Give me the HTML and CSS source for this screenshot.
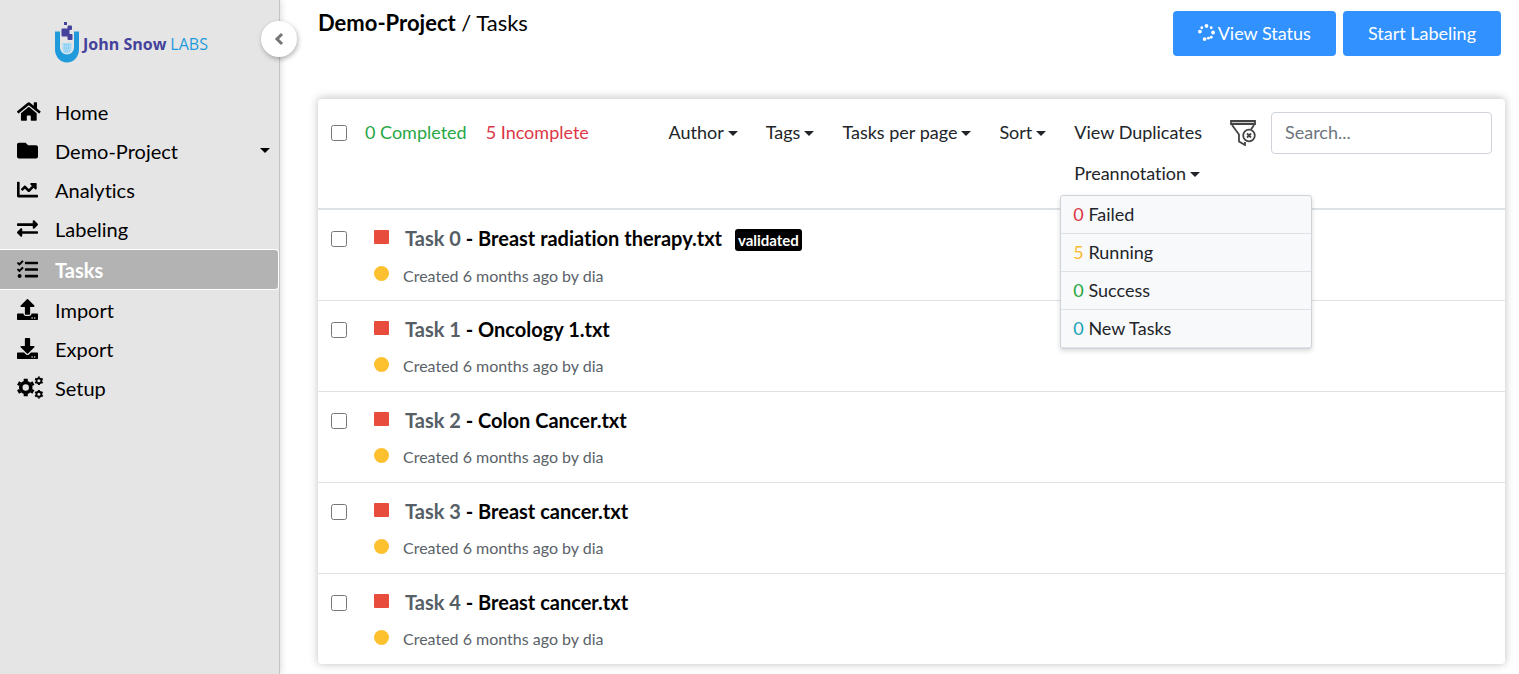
FILE: index.html
```
<!DOCTYPE html>
<html lang="en">
<head>
  <meta charset="UTF-8">
  <title>Demo-Project / Tasks</title>
  <link rel="stylesheet" href="styles.css">
</head>
<body>

  <!-- Sidebar -->
  <aside class="sidebar">
    <a class="logo" href="#">
      <svg class="logo-mark" viewBox="0 0 24 42" aria-hidden="true">
        <path d="M0 10.5h5v16a7 7 0 0 0 14 0v-16h5v18a12 13 0 0 1-24 0z" fill="#1f9bdc"/>
        <path d="M7.500 22h9v6a4.500 4.500 0 0 1-9 0z" fill="#a6dbf7"/>
        <path d="M9 24h6M9 27h6M10 30h4" stroke="#6fc0ea" stroke-dasharray="1 1"/>
        <g fill="#44429b">
          <rect x="9" y="1" width="3" height="3"/>
          <rect x="12.500" y="4.500" width="4.500" height="4.500" rx="1"/>
          <rect x="6.500" y="7.500" width="8" height="8" rx="1"/>
          <rect x="12.500" y="13" width="5" height="6" rx="1"/>
        </g>
      </svg>
      <span class="logo-name">John Snow</span>
      <span class="logo-labs">LABS</span>
    </a>

    <button class="collapse" type="button" aria-label="Collapse sidebar">
      <svg viewBox="0 0 10 14" aria-hidden="true"><path d="M8 2L3 7l5 5" fill="none" stroke="currentColor" stroke-width="3"/></svg>
    </button>

    <nav class="menu">
      <a class="menu-item" href="#">
        <svg class="icon" viewBox="0 0 576 512" preserveAspectRatio="xMinYMid" aria-hidden="true"><path d="M280.37 148.26L96 300.11V464a16 16 0 0 0 16 16l112.06-.29a16 16 0 0 0 15.92-16V368a16 16 0 0 1 16-16h64a16 16 0 0 1 16 16v95.64a16 16 0 0 0 16 16.05L464 480a16 16 0 0 0 16-16V300L295.67 148.26a12.19 12.19 0 0 0-15.3 0zM571.6 251.47L488 182.56V44.05a12 12 0 0 0-12-12h-56a12 12 0 0 0-12 12v72.61L318.47 43a48 48 0 0 0-61 0L4.34 251.47a12 12 0 0 0-1.6 16.9l25.5 31A12 12 0 0 0 45.15 301l235.22-193.74a12.19 12.19 0 0 1 15.3 0L530.9 301a12 12 0 0 0 16.9-1.6l25.5-31a12 12 0 0 0-1.7-16.93z"/></svg>
        <span>Home</span>
      </a>
      <a class="menu-item" href="#">
        <svg class="icon" viewBox="0 0 512 512" preserveAspectRatio="xMinYMid" aria-hidden="true"><path d="M464 128H272l-64-64H48C21.49 64 0 85.49 0 112v288c0 26.51 21.49 48 48 48h416c26.51 0 48-21.49 48-48V176c0-26.51-21.49-48-48-48z"/></svg>
        <span class="caret menu-caret">Demo-Project</span>
      </a>
      <a class="menu-item" href="#">
        <svg class="icon" viewBox="0 0 512 512" preserveAspectRatio="xMinYMid" aria-hidden="true"><path d="M496 384H64V80c0-8.84-7.16-16-16-16H16C7.16 64 0 71.16 0 80v336c0 17.67 14.33 32 32 32h464c8.84 0 16-7.16 16-16v-32c0-8.84-7.16-16-16-16zM464 96H345.94c-21.38 0-32.09 25.85-16.97 40.97l32.4 32.4L288 242.75l-73.37-73.37c-12.5-12.5-32.76-12.5-45.25 0l-68.69 68.69c-6.25 6.25-6.25 16.38 0 22.63l22.62 22.62c6.25 6.25 16.38 6.25 22.63 0L192 237.25l73.37 73.37c12.5 12.5 32.76 12.5 45.25 0l96-96 32.4 32.4c15.12 15.12 40.97 4.41 40.97-16.97V112c.01-8.84-7.15-16-15.99-16z"/></svg>
        <span>Analytics</span>
      </a>
      <a class="menu-item" href="#">
        <svg class="icon" viewBox="0 0 512 512" preserveAspectRatio="xMinYMid" aria-hidden="true"><path d="M0 168v-16c0-13.255 10.745-24 24-24h360V80c0-21.367 25.899-32.042 40.971-16.971l80 80c9.372 9.373 9.372 24.569 0 33.941l-80 80C409.956 271.982 384 261.456 384 240v-48H24c-13.255 0-24-10.745-24-24zm488 152H128v-48c0-21.314-25.862-32.08-40.971-16.971l-80 80c-9.372 9.373-9.372 24.569 0 33.941l80 80C102.057 463.997 128 453.437 128 432v-48h360c13.255 0 24-10.745 24-24v-16c0-13.255-10.745-24-24-24z"/></svg>
        <span>Labeling</span>
      </a>
      <a class="menu-item active" href="#">
        <svg class="icon" viewBox="0 0 512 512" preserveAspectRatio="xMinYMid" aria-hidden="true"><path d="M139.61 35.5a12 12 0 0 0-17 0L58.93 98.81l-22.7-22.12a12 12 0 0 0-17 0L3.53 92.41a12 12 0 0 0 0 17l47.59 47.4a12.78 12.78 0 0 0 17.61 0l15.59-15.62L156.52 69a12.09 12.09 0 0 0 .09-17zm0 159.19a12 12 0 0 0-17 0l-63.68 63.72-22.7-22.1a12 12 0 0 0-17 0L3.53 252a12 12 0 0 0 0 17L51 316.5a12.77 12.77 0 0 0 17.6 0l15.7-15.69 72.2-72.22a12 12 0 0 0 .09-16.9zM64 368c-26.49 0-48.59 21.5-48.59 48S37.53 464 64 464a48 48 0 0 0 0-96zm432 16H208a16 16 0 0 0-16 16v32a16 16 0 0 0 16 16h288a16 16 0 0 0 16-16v-32a16 16 0 0 0-16-16zm0-320H208a16 16 0 0 0-16 16v32a16 16 0 0 0 16 16h288a16 16 0 0 0 16-16V80a16 16 0 0 0-16-16zm0 160H208a16 16 0 0 0-16 16v32a16 16 0 0 0 16 16h288a16 16 0 0 0 16-16v-32a16 16 0 0 0-16-16z"/></svg>
        <span>Tasks</span>
      </a>
      <a class="menu-item" href="#">
        <svg class="icon" viewBox="0 0 512 512" preserveAspectRatio="xMinYMid" aria-hidden="true"><path d="M296 384h-80c-13.3 0-24-10.7-24-24V192h-87.7c-17.8 0-26.7-21.5-14.1-34.1L242.3 5.7c7.5-7.5 19.8-7.5 27.3 0l152.2 152.2c12.6 12.6 3.7 34.1-14.1 34.1H320v168c0 13.3-10.7 24-24 24zm216-8v112c0 13.3-10.7 24-24 24H24c-13.3 0-24-10.7-24-24V376c0-13.3 10.7-24 24-24h136v8c0 30.9 25.1 56 56 56h80c30.9 0 56-25.1 56-56v-8h136c13.3 0 24 10.7 24 24zm-124 88c0-11-9-20-20-20s-20 9-20 20 9 20 20 20 20-9 20-20zm64 0c0-11-9-20-20-20s-20 9-20 20 9 20 20 20 20-9 20-20z"/></svg>
        <span>Import</span>
      </a>
      <a class="menu-item" href="#">
        <svg class="icon" viewBox="0 0 512 512" preserveAspectRatio="xMinYMid" aria-hidden="true"><path d="M216 0h80c13.3 0 24 10.7 24 24v168h87.7c17.8 0 26.7 21.5 14.1 34.1L269.7 378.3c-7.5 7.5-19.8 7.5-27.3 0L90.1 226.1c-12.6-12.6-3.7-34.1 14.1-34.1H192V24c0-13.3 10.7-24 24-24zm296 376v112c0 13.3-10.7 24-24 24H24c-13.3 0-24-10.7-24-24V376c0-13.3 10.7-24 24-24h146.7l49 49c20.1 20.1 52.5 20.1 72.6 0l49-49H488c13.3 0 24 10.7 24 24zm-124 88c0-11-9-20-20-20s-20 9-20 20 9 20 20 20 20-9 20-20zm64 0c0-11-9-20-20-20s-20 9-20 20 9 20 20 20 20-9 20-20z"/></svg>
        <span>Export</span>
      </a>
      <a class="menu-item" href="#">
        <svg class="icon" viewBox="0 0 640 512" preserveAspectRatio="xMinYMid" aria-hidden="true">
          <g fill="none" stroke="#000">
            <circle cx="213" cy="256" r="122" stroke-width="88"/>
            <path d="M213 40v432M26 148l374 216M26 364l374-216" stroke-width="100" stroke-dasharray="60 312"/>
            <circle cx="534" cy="92" r="60" stroke-width="44"/>
            <path d="M534-14v212M442 39l184 106M442 145l184-106" stroke-width="48" stroke-dasharray="34 144"/>
            <circle cx="534" cy="420" r="60" stroke-width="44"/>
            <path d="M534 314v212M442 367l184 106M442 473l184-106" stroke-width="48" stroke-dasharray="34 144"/>
          </g>
        </svg>
        <span>Setup</span>
      </a>
    </nav>
  </aside>
  <!-- End of Sidebar -->

  <main class="content">
    <header class="page-header">
      <h1 class="page-title"><strong>Demo-Project</strong> / Tasks</h1>
      <div class="actions">
        <button class="btn" type="button">
          <svg class="spinner" viewBox="0 0 18 18" aria-hidden="true">
            <g fill="#fff">
              <circle cx="9" cy="2" r="2"/>
              <circle cx="14" cy="4" r="1.500"/>
              <circle cx="16" cy="9" r="2"/>
              <circle cx="14" cy="14" r="1.500"/>
              <circle cx="7" cy="16" r="2"/>
              <circle cx="2" cy="8" r="2"/>
              <circle cx="4" cy="4" r="1.500"/>
              <circle cx="11" cy="15" r="1.500"/>
            </g>
          </svg>
          View Status
        </button>
        <button class="btn" type="button">Start Labeling</button>
      </div>
    </header>

    <section class="card">
      <!-- Filters -->
      <div class="toolbar">
        <input class="check" type="checkbox" aria-label="Select all tasks">
        <a class="count green" href="#">0 Completed</a>
        <a class="count red" href="#">5 Incomplete</a>

        <div class="filters">
          <button class="filter caret" type="button">Author</button>
          <button class="filter caret" type="button">Tags</button>
          <button class="filter caret" type="button">Tasks per page</button>
          <button class="filter caret" type="button">Sort</button>
          <div class="filter-stack">
            <button class="filter" type="button">View Duplicates</button>
            <button class="filter caret" type="button" aria-expanded="true">Preannotation</button>
            <ul class="dropdown">
              <li><a href="#"><span class="red">0</span> Failed</a></li>
              <li><a href="#"><span class="yellow">5</span> Running</a></li>
              <li><a href="#"><span class="green">0</span> Success</a></li>
              <li><a href="#"><span class="teal">0</span> New Tasks</a></li>
            </ul>
          </div>
          <button class="clear" type="button" aria-label="Clear filters">
            <svg viewBox="0 0 26 26" aria-hidden="true">
              <path d="M1 1h24v3H1z" fill="#ccc"/>
              <g fill="none" stroke="#444" stroke-width="1.800">
                <path d="M1 1h24v3H1zM2 5l7 9.500v7l6 3.500v-3M24 5l-3 4.500"/>
                <circle cx="19" cy="15.500" r="5.800"/>
                <path d="M17 13.500l4 4M21 13.500l-4 4"/>
              </g>
            </svg>
          </button>
        </div>
        <input class="search" type="text" placeholder="Search..." aria-label="Search">
      </div>

      <!-- Task list -->
      <ul class="tasks">
        <li class="task">
          <input class="check" type="checkbox" aria-label="Select Task 0">
          <div class="marks"><span class="square"></span><span class="dot"></span></div>
          <div class="info">
            <a class="task-title" href="#"><span class="task-id">Task 0</span> - Breast radiation therapy.txt <span class="badge">validated</span></a>
            <p class="meta">Created 6 months ago by dia</p>
          </div>
        </li>
        <li class="task">
          <input class="check" type="checkbox" aria-label="Select Task 1">
          <div class="marks"><span class="square"></span><span class="dot"></span></div>
          <div class="info">
            <a class="task-title" href="#"><span class="task-id">Task 1</span> - Oncology 1.txt</a>
            <p class="meta">Created 6 months ago by dia</p>
          </div>
        </li>
        <li class="task">
          <input class="check" type="checkbox" aria-label="Select Task 2">
          <div class="marks"><span class="square"></span><span class="dot"></span></div>
          <div class="info">
            <a class="task-title" href="#"><span class="task-id">Task 2</span> - Colon Cancer.txt</a>
            <p class="meta">Created 6 months ago by dia</p>
          </div>
        </li>
        <li class="task">
          <input class="check" type="checkbox" aria-label="Select Task 3">
          <div class="marks"><span class="square"></span><span class="dot"></span></div>
          <div class="info">
            <a class="task-title" href="#"><span class="task-id">Task 3</span> - Breast cancer.txt</a>
            <p class="meta">Created 6 months ago by dia</p>
          </div>
        </li>
        <li class="task">
          <input class="check" type="checkbox" aria-label="Select Task 4">
          <div class="marks"><span class="square"></span><span class="dot"></span></div>
          <div class="info">
            <a class="task-title" href="#"><span class="task-id">Task 4</span> - Breast cancer.txt</a>
            <p class="meta">Created 6 months ago by dia</p>
          </div>
        </li>
      </ul>
    </section>
  </main>

</body>
</html>
```
FILE: styles.css
```
* {
  box-sizing: border-box;
}

body {
  background-color: #fff;
  color: #212529;
  display: flex;
  font-family: Lato, sans-serif;
  font-size: 18px;
  font-variant-ligatures: none;
  line-height: 24px;
  margin: 0;
  min-height: 100vh;
}

a {
  color: inherit;
  text-decoration: none;
}

button {
  background: none;
  border: 0;
  color: inherit;
  cursor: pointer;
  font: inherit;
  font-variant-ligatures: none;
  padding: 0;
}

ul {
  list-style: none;
  margin: 0;
  padding: 0;
}

/* Sidebar */
.sidebar {
  background-color: #e5e5e5;
  border-right: 1px solid #c4c4c4;
  box-shadow: 1px 0 6px rgba(0, 0, 0, 0.15);
  flex: 0 0 280px;
  position: relative;
}

.logo {
  align-items: center;
  display: flex;
  font-family: "Open Sans", sans-serif;
  font-size: 16px;
  height: 92px;
  padding: 0 0 8px 55px;
}

.logo span {
  padding-top: 3px;
}

.logo-mark {
  height: 42px;
  margin-right: 4px;
  width: 24px;
}

.logo-name {
  color: #44429b;
  font-weight: 700;
  margin-right: 4px;
}

.logo-labs {
  color: #1f9bdc;
}

.collapse {
  align-items: center;
  background-color: #fff;
  border-radius: 50%;
  box-shadow: 1px 2px 5px rgba(0, 0, 0, 0.3);
  color: #757575;
  display: flex;
  height: 36px;
  justify-content: center;
  position: absolute;
  right: -18px;
  top: 21px;
  width: 36px;
}

.collapse svg {
  height: 14px;
  width: 10px;
}

.menu-item {
  align-items: center;
  color: #000;
  display: flex;
  font-size: 20px;
  height: 39px;
  padding: 0 9px 0 17px;
}

.menu-item span {
  flex: 1;
}

.menu-item.active {
  background-color: #b3b3b3;
  border: 1px solid #fff;
  border-left: 0;
  border-radius: 0 4px 4px 0;
  height: 41px;
  margin-top: 1px;
}

.menu-item.active span {
  color: #fff;
  font-weight: 700;
}

.icon {
  flex: none;
  height: 21px;
  overflow: visible;
  width: 38px;
}

.caret::after {
  border-left: 5px solid transparent;
  border-right: 5px solid transparent;
  border-top: 5px solid;
  content: "";
  display: inline-block;
  margin-left: 4px;
  vertical-align: 3px;
}

.menu-caret {
  align-items: center;
  display: flex;
  justify-content: space-between;
}

/* Content */
.content {
  flex: 1;
  padding: 11px 14px 10px 38px;
}

.page-header {
  display: flex;
  justify-content: space-between;
  padding-right: 4px;
}

.page-title {
  color: #000;
  font-size: 22px;
  font-weight: 400;
  margin: 0;
}

.actions {
  display: flex;
  gap: 7px;
}

.btn {
  align-items: center;
  background-color: #3091ff;
  border-radius: 4px;
  color: #fff;
  display: flex;
  gap: 3px;
  height: 45px;
  padding: 0 25px 2px;
}

.spinner {
  height: 17px;
  width: 17px;
}

.card {
  border-radius: 4px;
  border-top: 1px solid #dee2e6;
  box-shadow: 0 0 8px rgba(0, 0, 0, 0.25);
  margin-top: 42px;
}

.toolbar {
  align-items: flex-start;
  border-bottom: 2px solid #dee2e6;
  display: flex;
  height: 111px;
  padding: 13px 13px 0;
}

.check {
  flex: none;
  height: 16px;
  margin: 0;
  width: 16px;
}

.toolbar .check {
  margin: 13px 18px 0 0;
}

.count {
  margin-right: 19px;
  padding-top: 8px;
}

.green {
  color: #28a745;
}

.red {
  color: #dc3545;
}

.yellow {
  color: #fbbc34;
}

.teal {
  color: #17a2b8;
}

.filters {
  align-items: flex-start;
  display: flex;
  gap: 28px;
  margin-left: auto;
  padding-top: 8px;
}

.filter-stack {
  align-items: flex-start;
  display: flex;
  flex-direction: column;
  gap: 17px;
  position: relative;
}

.clear {
  height: 26px;
  width: 26px;
}

.clear svg {
  display: block;
  height: 26px;
  width: 26px;
}

.dropdown {
  background-color: #f8f9fb;
  border: 1px solid #ced4da;
  border-radius: 3px;
  box-shadow: 0 2px 5px rgba(0, 0, 0, 0.15);
  left: -14px;
  position: absolute;
  top: 75px;
  width: 252px;
}

.dropdown a {
  border-bottom: 1px solid #dee2e6;
  display: block;
  height: 38px;
  line-height: 36px;
  padding-left: 12px;
}

.search {
  border: 1px solid #ced4da;
  border-radius: 4px;
  color: #495057;
  font: inherit;
  height: 42px;
  margin-left: 15px;
  padding: 0 13px 2px;
  width: 221px;
}

.search::placeholder {
  color: #6c757d;
}

/* Task list */
.task {
  border-bottom: 1px solid #dee2e6;
  display: flex;
  height: 91px;
  padding: 16px 13px 0;
}

.task:last-child {
  border-bottom: 0;
  height: 90px;
}

.task .check {
  margin: 5px 27px 0 0;
}

.marks {
  display: flex;
  flex-direction: column;
  gap: 22px;
  margin-right: 14px;
  padding-top: 4px;
}

.square {
  background-color: #e74c3c;
  border-radius: 1px;
  height: 14px;
  width: 15px;
}

.dot {
  background-color: #fdc02f;
  border-radius: 50%;
  height: 15px;
  width: 15px;
}

.task-title {
  color: #000;
  font-size: 20px;
  font-weight: 700;
  padding-left: 2px;
}

.task-id {
  color: #565e66;
}

.badge {
  background-color: #000;
  border-radius: 3px;
  color: #fff;
  font-size: 15px;
  margin-left: 8px;
  padding: 2px 3px;
}

.meta {
  color: #5a6268;
  font-size: 16px;
  margin: 12px 0 0;
}
```
